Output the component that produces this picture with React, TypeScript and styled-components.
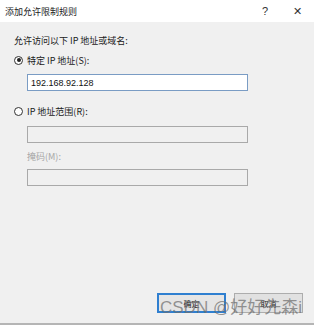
import React from "react";
import styled, { createGlobalStyle } from "styled-components";

const Global = createGlobalStyle`
  html, body { margin: 0; padding: 0; background: #ffffff; }
  * { box-sizing: border-box; }
`;

const Window = styled.div`
  position: relative;
  width: 314px;
  height: 328px;
  display: flex;
  flex-direction: column;
  background: #f0f0f0;
  font-family: "Noto Sans CJK SC", "Liberation Sans", sans-serif;
  font-size: 9px;
  color: #1a1a1a;
  overflow: hidden;
`;

const TitleBar = styled.div`
  height: 22px;
  background: #ffffff;
  display: flex;
  align-items: center;
  padding-left: 5px;
`;

const Title = styled.div`
  flex: 1;
  font-size: 9px;
  color: #222;
`;

const TitleButton = styled.div<{ $w: number }>`
  width: ${(p) => p.$w}px;
  text-align: center;
  font-family: "Liberation Sans", sans-serif;
  font-size: 11px;
  color: #333;
`;

const Content = styled.div`
  flex: 1;
  display: flex;
  flex-direction: column;
  padding: 13px 0 0 14px;
`;

const Label = styled.div<{ $mt?: number; $disabled?: boolean; $indent?: number }>`
  height: 12px;
  line-height: 12px;
  margin-top: ${(p) => p.$mt ?? 0}px;
  margin-left: ${(p) => p.$indent ?? 0}px;
  color: ${(p) => (p.$disabled ? "#a6a6a6" : "#1a1a1a")};
`;

const RadioRow = styled.label<{ $mt: number }>`
  display: flex;
  align-items: center;
  gap: 4px;
  height: 12px;
  margin-top: ${(p) => p.$mt}px;
`;

const RadioCircle = styled.span<{ $checked?: boolean }>`
  width: 9px;
  height: 9px;
  border-radius: 50%;
  border: 1px solid #333;
  background: #fff;
  display: flex;
  align-items: center;
  justify-content: center;
  &::after {
    content: "";
    width: 4px;
    height: 4px;
    border-radius: 50%;
    background: ${(p) => (p.$checked ? "#222" : "transparent")};
  }
`;

const Input = styled.div<{ $mt: number; $active?: boolean }>`
  width: 221px;
  height: 17px;
  margin-top: ${(p) => p.$mt}px;
  margin-left: 13px;
  border: 1px solid ${(p) => (p.$active ? "#7a9cc4" : "#a9a9a9")};
  background: ${(p) => (p.$active ? "#ffffff" : "#f0f0f0")};
  padding-left: 3px;
  display: flex;
  align-items: center;
  font-family: "Liberation Sans", sans-serif;
  font-size: 9px;
  color: #111;
`;

const Footer = styled.div`
  display: flex;
  justify-content: flex-end;
  gap: 8px;
  padding: 0 11px 10px 0;
`;

const Button = styled.div<{ $primary?: boolean }>`
  width: 69px;
  height: 20px;
  display: flex;
  align-items: center;
  justify-content: center;
  font-size: 8px;
  color: #222;
  background: ${(p) => (p.$primary ? "#e5e5e5" : "#e1e1e1")};
  border: ${(p) => (p.$primary ? "2px solid #2f7fd0" : "1px solid #adadad")};
`;

const BottomEdge = styled.div`
  height: 2px;
  background: #b5b5b5;
`;

const BottomWhite = styled.div`
  height: 3px;
  background: #ffffff;
`;

const Watermark = styled.div`
  position: absolute;
  left: 160px;
  top: 296px;
  font-family: "Liberation Sans", "Noto Sans CJK SC", sans-serif;
  font-size: 17px;
  line-height: 24px;
  color: rgba(110, 110, 110, 0.72);
  white-space: nowrap;
  pointer-events: none;
`;

export default function App() {
  return (
    <>
      <Global />
      <Window>
        <TitleBar>
          <Title>添加允许限制规则</Title>
          <TitleButton $w={30}>?</TitleButton>
          <TitleButton $w={34}>✕</TitleButton>
        </TitleBar>
        <Content>
          <Label>允许访问以下 IP 地址或域名:</Label>
          <RadioRow $mt={7}>
            <RadioCircle $checked />
            <span>特定 IP 地址(S):</span>
          </RadioRow>
          <Input $mt={8} $active>192.168.92.128</Input>
          <RadioRow $mt={14}>
            <RadioCircle />
            <span>IP 地址范围(R):</span>
          </RadioRow>
          <Input $mt={9} />
          <Label $mt={8} $indent={13} $disabled>掩码(M):</Label>
          <Input $mt={6} />
        </Content>
        <Footer>
          <Button $primary>确定</Button>
          <Button>取消</Button>
        </Footer>
        <BottomEdge />
        <BottomWhite />
        <Watermark>CSDN @好好先森i</Watermark>
      </Window>
    </>
  );
}
